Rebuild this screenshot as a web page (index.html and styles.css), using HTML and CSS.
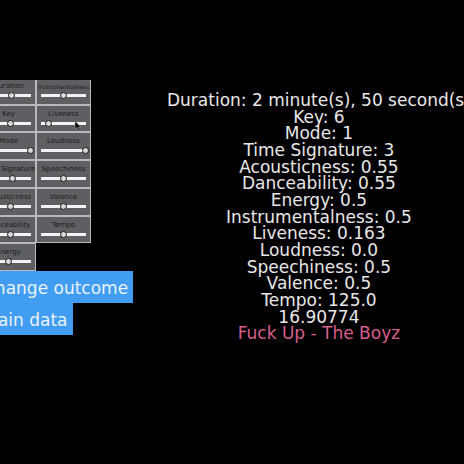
FILE: index.html
```
<!DOCTYPE html>
<html lang="en">
<head>
<meta charset="utf-8">
<title>Song features</title>
<link rel="stylesheet" href="styles.css">
</head>
<body>
<main class="app">
  <section class="controls">
    <div class="viewport">
      <div class="panel">
        <label class="cell"><span>Duration</span><input type="range" min="0" max="100" value="56"></label>
        <label class="cell small"><span>Instrumentalness</span><input type="range" min="0" max="100" value="50"></label>
        <label class="cell"><span>Key</span><input type="range" min="0" max="100" value="54"></label>
        <label class="cell"><span>Liveness</span><input type="range" min="0" max="100" value="15"></label>
        <label class="cell"><span>Mode</span><input type="range" min="0" max="100" value="100"></label>
        <label class="cell"><span>Loudness</span><input type="range" min="0" max="100" value="100"></label>
        <label class="cell"><span>Time Signature</span><input type="range" min="0" max="100" value="60"></label>
        <label class="cell"><span>Speechiness</span><input type="range" min="0" max="100" value="50"></label>
        <label class="cell"><span>Acousticness</span><input type="range" min="0" max="100" value="55"></label>
        <label class="cell"><span>Valence</span><input type="range" min="0" max="100" value="50"></label>
        <label class="cell"><span>Danceability</span><input type="range" min="0" max="100" value="55"></label>
        <label class="cell"><span>Tempo</span><input type="range" min="0" max="100" value="50"></label>
        <label class="cell"><span>Energy</span><input type="range" min="0" max="100" value="50"></label>
      </div>
      <svg class="cursor" viewBox="0 0 8 12" aria-hidden="true"><path d="M1 1V9L3 7.500L4.500 11L6 10L4.500 7H7Z"/></svg>
    </div>
    <div class="actions">
      <button type="button">Change outcome</button>
      <button type="button">Train data</button>
    </div>
  </section>
  <section class="info">
    <p>Duration: 2 minute(s), 50 second(s)</p>
    <p>Key: 6</p>
    <p>Mode: 1</p>
    <p>Time Signature: 3</p>
    <p>Acousticness: 0.55</p>
    <p>Danceability: 0.55</p>
    <p>Energy: 0.5</p>
    <p>Instrumentalness: 0.5</p>
    <p>Liveness: 0.163</p>
    <p>Loudness: 0.0</p>
    <p>Speechiness: 0.5</p>
    <p>Valence: 0.5</p>
    <p>Tempo: 125.0</p>
    <p>16.90774</p>
    <p class="song">Fuck Up - The Boyz</p>
  </section>
</main>
</body>
</html>
```
FILE: styles.css
```
* {
  box-sizing: border-box;
}

body {
  margin: 0;
  min-height: 100vh;
  overflow: hidden;
  background: #000;
  color: #e8e8e8;
  font-family: "DejaVu Sans", Verdana, sans-serif;
  font-size: 17px;
}

.app {
  display: flex;
  align-items: flex-start;
  padding-top: 80px;
}

.controls {
  flex: 0 0 167px;
}

.viewport {
  position: relative;
  overflow: hidden;
}

.panel {
  display: grid;
  grid-template-columns: 55px 55px;
  grid-template-rows: repeat(7, 1fr);
  height: 194px;
  margin: -3px 0 0 -19px;
}

.cell {
  display: flex;
  flex-direction: column;
  align-items: center;
  min-width: 0;
  padding-top: 4px;
  border: 1px solid #b9b9bb;
  background: #5f5e61;
  color: #1d1c1f;
  font-size: 7px;
  line-height: 9px;
  white-space: nowrap;
}

.cell.small {
  font-size: 6px;
}

input {
  appearance: none;
  width: 51px;
  height: 7px;
  margin: 1px 0 0;
  background: linear-gradient(#f2f2f2, #f2f2f2) center / 45px 3px no-repeat;
}

input::-webkit-slider-thumb {
  appearance: none;
  width: 7px;
  height: 7px;
  border: 1px solid #19191b;
  border-radius: 50%;
  background: #d8d8d8;
}

.cursor {
  position: absolute;
  left: 74px;
  top: 40px;
  width: 8px;
  height: 12px;
  fill: #111;
  stroke: #aaa;
  stroke-width: 0.5;
}

.actions {
  display: flex;
  flex-direction: column;
  align-items: flex-start;
  margin-left: -22px;
}

button {
  height: 32px;
  padding: 2px 5px 0;
  border: 0;
  background: #409df2;
  color: #e9f3fa;
  font: inherit;
  white-space: nowrap;
}

.info {
  display: grid;
  flex: none;
  grid-auto-rows: 1fr;
  height: 250px;
  margin-top: 12px;
  line-height: 16px;
  text-align: center;
  white-space: nowrap;
}

.info p {
  margin: 0;
}

.info .song {
  color: #d75f8b;
}
```
